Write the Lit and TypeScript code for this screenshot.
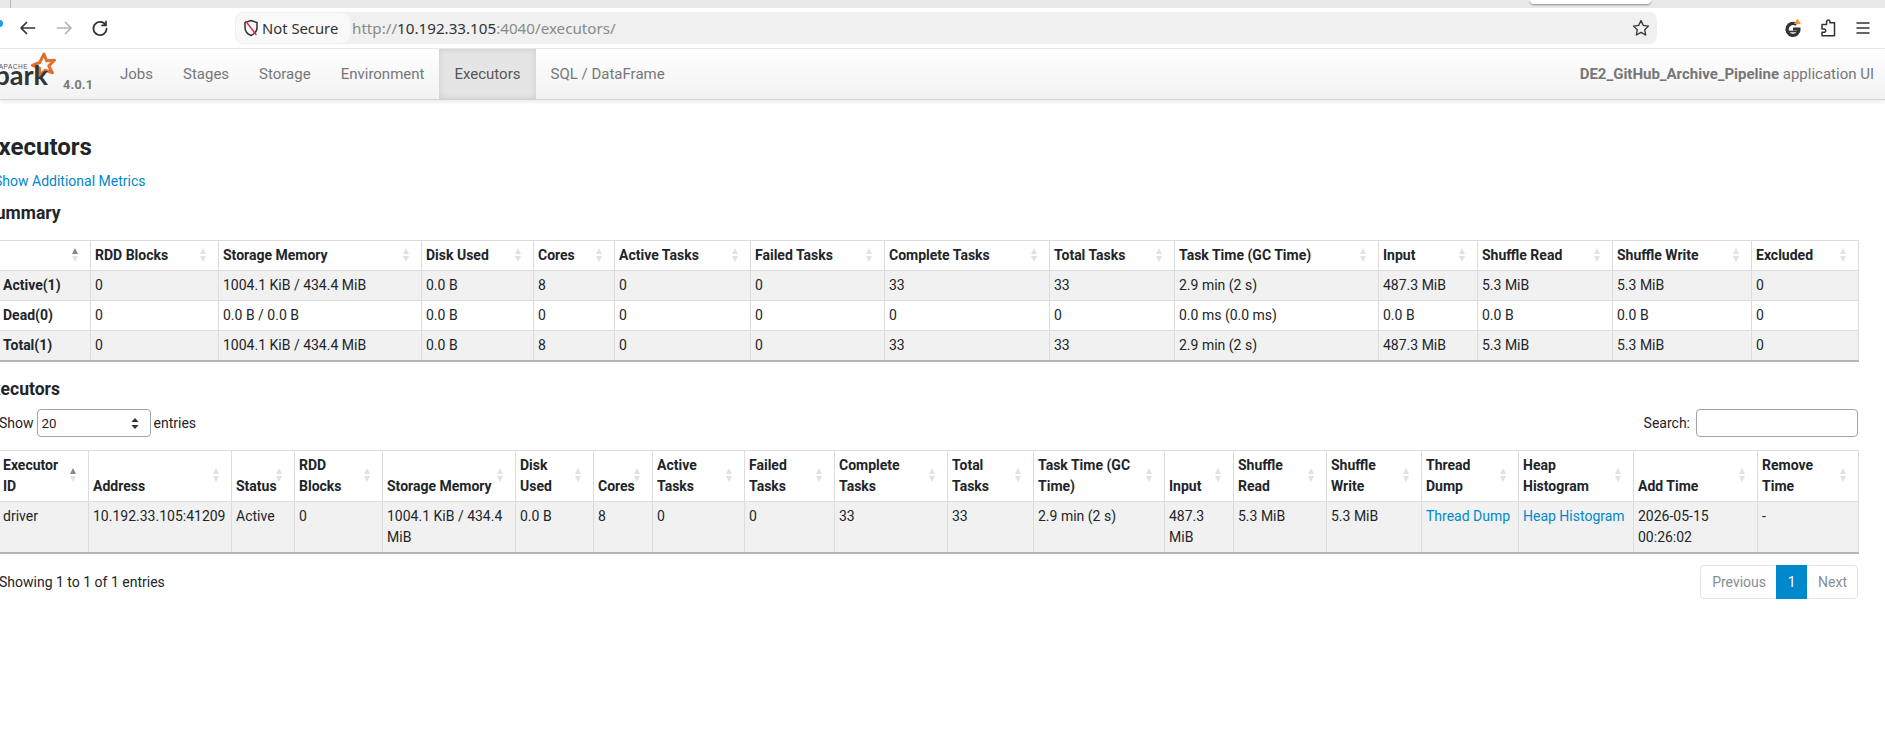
import { LitElement, html, css, svg } from 'lit';
import { customElement } from 'lit/decorators.js';

// column borders in page px, widths are derived from these
const summaryEdges = [-2, 90, 218, 421, 533, 614, 750, 884, 1049, 1174, 1378, 1477, 1612, 1751, 1858];
const executorEdges = [-2, 88, 231, 294, 382, 515, 593, 652, 744, 834, 947, 1033, 1164, 1233, 1326, 1421, 1518, 1633, 1757, 1858];

const summaryHead = ['', 'RDD Blocks', 'Storage Memory', 'Disk Used', 'Cores', 'Active Tasks', 'Failed Tasks',
  'Complete Tasks', 'Total Tasks', 'Task Time (GC Time)', 'Input', 'Shuffle Read', 'Shuffle Write', 'Excluded'];

const summaryRows = [
  ['Active(1)', '0', '1004.1 KiB / 434.4 MiB', '0.0 B', '8', '0', '0', '33', '33', '2.9 min (2 s)', '487.3 MiB', '5.3 MiB', '5.3 MiB', '0'],
  ['Dead(0)', '0', '0.0 B / 0.0 B', '0.0 B', '0', '0', '0', '0', '0', '0.0 ms (0.0 ms)', '0.0 B', '0.0 B', '0.0 B', '0'],
  ['Total(1)', '0', '1004.1 KiB / 434.4 MiB', '0.0 B', '8', '0', '0', '33', '33', '2.9 min (2 s)', '487.3 MiB', '5.3 MiB', '5.3 MiB', '0'],
];

const executorHead = ['Executor ID', 'Address', 'Status', 'RDD Blocks', 'Storage Memory', 'Disk Used', 'Cores',
  'Active Tasks', 'Failed Tasks', 'Complete Tasks', 'Total Tasks', 'Task Time (GC Time)', 'Input', 'Shuffle Read',
  'Shuffle Write', 'Thread Dump', 'Heap Histogram', 'Add Time', 'Remove Time'];

const executorRow = ['driver', '10.192.33.105:41209', 'Active', '0', '1004.1 KiB / 434.4 MiB', '0.0 B', '8', '0', '0',
  '33', '33', '2.9 min (2 s)', '487.3 MiB', '5.3 MiB', '5.3 MiB', 'Thread Dump', 'Heap Histogram', '2026-05-15 00:26:02', '-'];

const navItems = ['Jobs', 'Stages', 'Storage', 'Environment', 'Executors', 'SQL / DataFrame'];

const isLink = (v: string) => v === 'Thread Dump' || v === 'Heap Histogram';

@customElement('app-root')
export class AppRoot extends LitElement {
  static styles = css`
    :host {
      display: block;
      height: 755px;
      overflow: hidden;
      background: #fff;
      font-family: Roboto, sans-serif;
      font-size: 14px;
      line-height: 21px;
      color: #212529;
    }

    /* browser chrome */
    .tabstrip {
      position: relative;
      height: 8px;
      background: #e9e9e9;
    }
    .tabstrip .sep {
      position: absolute;
      left: 10px;
      top: 0;
      width: 1px;
      height: 8px;
      background: #b5b5b5;
    }
    .tabstrip .popup {
      position: absolute;
      left: 1530px;
      top: 0;
      width: 121px;
      height: 4px;
      background: #fff;
      border-radius: 0 0 6px 6px;
      box-shadow: 0 1px 2px rgba(0, 0, 0, 0.4);
    }
    .toolbar {
      position: relative;
      display: flex;
      align-items: center;
      height: 40px;
      border-bottom: 1px solid #e6e6e6;
      background: #fff;
      font-family: 'Noto Sans', sans-serif;
    }
    .dot {
      position: absolute;
      left: -4px;
      top: 12px;
      width: 7px;
      height: 7px;
      border-radius: 50%;
      background: #1a9df0;
    }
    .navicon {
      display: flex;
      width: 36px;
      justify-content: center;
    }
    .navicons {
      display: flex;
      margin-left: 10px;
      width: 225px;
    }
    .urlbar {
      display: flex;
      align-items: center;
      width: 1422px;
      height: 32px;
      box-sizing: border-box;
      background: #f0f0f0;
      border-radius: 8px;
      padding: 1px 7px 1px 1px;
    }
    .chip {
      display: flex;
      align-items: center;
      gap: 3px;
      width: 114px;
      height: 30px;
      box-sizing: border-box;
      padding-left: 7px;
      background: #f9f9f9;
      border-radius: 8px;
      font-size: 14.8px;
      color: #333;
      white-space: nowrap;
    }
    .url {
      flex: 1;
      margin-left: 2px;
      font-size: 15.2px;
      color: #8a8a8a;
      white-space: nowrap;
    }
    .url b {
      font-weight: 400;
      color: #333;
    }
    .tools {
      display: flex;
      align-items: center;
      margin-left: 127px;
      gap: 17px;
    }

    /* spark navbar */
    .navbar {
      display: flex;
      align-items: stretch;
      height: 50px;
      background: linear-gradient(to bottom, #fff, #f2f2f2);
      border-bottom: 1px solid #d4d4d4;
      box-shadow: 0 1px 5px rgba(0, 0, 0, 0.12);
      color: #777;
      font-size: 15px;
    }
    .brand {
      display: block;
      width: 105px;
      height: 50px;
      flex: none;
    }
    .navlink {
      display: flex;
      align-items: center;
      padding: 0 15px;
    }
    .navlink.active {
      background: #e5e5e5;
      color: #555;
      box-shadow: inset 0 0 7px rgba(0, 0, 0, 0.12);
    }
    .appname {
      margin-left: auto;
      align-self: center;
      padding-right: 11px;
    }
    .appname b {
      font-weight: 700;
    }

    /* page */
    .page {
      width: 1860px;
      margin-left: -2px;
      padding-top: 33px;
    }
    h1 {
      margin: 0 0 9px -13px;
      font-size: 24px;
      line-height: 29px;
      font-weight: 700;
    }
    .metrics {
      display: block;
      margin-left: -4px;
      color: #0088cc;
    }
    h2 {
      margin: 11px 0 17px -13px;
      font-size: 17.5px;
      line-height: 20px;
      font-weight: 700;
    }
    h2.second {
      margin: 17px 0 10px -16px;
    }
    a {
      color: #0088cc;
      text-decoration: none;
    }

    table {
      table-layout: fixed;
      width: 1860px;
      border-collapse: collapse;
    }
    th, td {
      border: 1px solid #dcdcdc;
      padding: 4px 5px 4px 4px;
      text-align: left;
      vertical-align: top;
    }
    th {
      position: relative;
      vertical-align: bottom;
      padding-right: 16px;
      font-weight: 700;
    }
    .summary th {
      white-space: nowrap;
    }
    td.label {
      font-weight: 700;
    }
    tbody tr:nth-child(odd) td {
      background: #f1f1f1;
    }
    tbody tr:last-child td {
      border-bottom: 2px solid #b4b4b4;
    }
    .sort {
      position: absolute;
      right: 12px;
      top: 50%;
      display: flex;
      flex-direction: column;
      gap: 2px;
      margin-top: -8px;
    }
    .sort i {
      display: block;
      width: 0;
      height: 0;
      border-left: 3.5px solid transparent;
      border-right: 3.5px solid transparent;
    }
    .sort .up {
      border-bottom: 6px solid #dfe3e6;
    }
    .sort .down {
      border-top: 6px solid #dfe3e6;
    }
    .sort.on .up {
      border-bottom-color: #868686;
    }

    .controls {
      display: flex;
      justify-content: space-between;
      align-items: center;
      height: 28px;
      margin-bottom: 13px;
    }
    .length, .search {
      display: flex;
      align-items: center;
    }
    .length {
      margin-left: 1px;
    }
    .select {
      display: flex;
      align-items: center;
      justify-content: space-between;
      box-sizing: border-box;
      width: 114px;
      height: 28px;
      margin: 0 3px 0 3px;
      padding: 1px 11px 0 4px;
      border: 1px solid #a3a3a3;
      border-radius: 4px;
      font-size: 13.3px;
    }
    .search input {
      box-sizing: border-box;
      width: 162px;
      height: 28px;
      margin-left: 6px;
      padding: 0 4px;
      border: 1px solid #a3a3a3;
      border-radius: 4px;
      background: #fff;
    }
    .footer {
      display: flex;
      justify-content: space-between;
      align-items: center;
      margin: 11px 0 0 1px;
    }
    .pager {
      display: flex;
      height: 34px;
      box-sizing: border-box;
      border: 1px solid #e3e6e8;
      border-radius: 4px;
      color: #868e96;
    }
    .pager span {
      display: flex;
      align-items: center;
      padding: 0 11px;
    }
    .pager .prev {
      padding-right: 10px;
    }
    .pager .next {
      padding-right: 10px;
    }
    .pager .current {
      margin: -1px 0;
      width: 31px;
      box-sizing: border-box;
      justify-content: center;
      background: #0088cc;
      color: #fff;
    }
  `;

  private icon(d: string, color = '#333', width = 1.7) {
    return html`<svg width="20" height="20" viewBox="0 0 20 20" fill="none" stroke=${color} stroke-width=${width}
      stroke-linecap="round" stroke-linejoin="round">${svg`<path d=${d}></path>`}</svg>`;
  }

  private renderChrome() {
    return html`
      <div class="tabstrip"><div class="sep"></div><div class="popup"></div></div>
      <div class="toolbar">
        <div class="dot"></div>
        <div class="navicons">
          <span class="navicon">${this.icon('M16.5 10H3.5M8.5 4.5L3 10l5.5 5.5')}</span>
          <span class="navicon">${this.icon('M3.5 10h13M11.5 4.5L17 10l-5.5 5.5', '#b4b4b4')}</span>
          <span class="navicon">${this.icon('M15.6 7A6.6 6.6 0 1 0 16.6 10.6M16 3.4V7.4H12', '#333')}</span>
        </div>
        <div class="urlbar">
          <div class="chip">
            <svg width="16" height="18" viewBox="0 0 16 18" fill="none" stroke-linecap="round">
              <path d="M8 1.5l6 2v5c0 4-2.6 6.6-6 8-3.4-1.4-6-4-6-8v-5z" stroke="#333" stroke-width="1.5"></path>
              <path d="M3 2.5l10 13" stroke="#e0314a" stroke-width="1.5"></path>
            </svg>
            Not Secure
          </div>
          <div class="url">http://<b>10.192.33.105</b>:4040/executors/</div>
          <svg width="18" height="18" viewBox="0 0 18 18" fill="none" stroke="#333" stroke-width="1.3" stroke-linejoin="round">
            <path d="M9 1.5l2.3 4.9 5.2.7-3.8 3.6 1 5.3L9 13.4 4.3 16l1-5.3L1.500 7.1l5.2-.7z"></path>
          </svg>
        </div>
        <div class="tools">
          <svg width="18" height="20" viewBox="0 0 18 20" fill="none">
            <path d="M12.500 6.500A6 6 0 1 0 15 11H9" stroke="#333" stroke-width="3.2"></path>
            <path d="M3.500 13.500h11" stroke="#333" stroke-width="1.6"></path>
            <path d="M13.500 0.500l3.500 5.500h-7z" fill="#f59b2c"></path>
          </svg>
          <svg width="18" height="20" viewBox="0 0 18 20" fill="none" stroke="#333" stroke-width="1.5" stroke-linejoin="round">
            <path d="M8 2.500c1.800-1.200 3.600.2 2.800 2.300H15.500v13H3v-3.600h2.800c1.400-.6 1.200-3-.6-3.200H3V6.500h4.500c.4-1.300-.4-2.700.5-4z"></path>
          </svg>
          <svg width="18" height="20" viewBox="0 0 18 20" fill="none" stroke="#333" stroke-width="1.4">
            <path d="M2.500 5h13M2.500 10h13M2.500 15h13"></path>
          </svg>
        </div>
      </div>
    `;
  }

  private renderBrand() {
    return html`<svg class="brand" viewBox="0 0 105 50">
      <path d="M44 5l2.500 6.800 8-.6-5.800 5.800 3.800 6.800-7.400-2.600-5.300 5.300-.4-7.400-7-2.700 7.300-2.900z"
        fill="none" stroke="#e0702c" stroke-width="3" stroke-linejoin="round"></path>
      <text x="28" y="19.500" text-anchor="end" font-family="'Liberation Sans', sans-serif" font-size="6.500"
        font-weight="400" letter-spacing="0.500" fill="#555">APACHE</text>
      <text x="48" y="35.500" text-anchor="end" font-family="Lato, sans-serif" font-size="27" font-weight="700"
        fill="#333">park</text>
      <text x="63" y="40" font-family="Roboto, sans-serif" font-size="12.500" font-weight="700" letter-spacing="0.300"
        fill="#777">4.0.1</text>
    </svg>`;
  }

  private renderNavbar() {
    return html`
      <nav class="navbar">
        ${this.renderBrand()}
        ${navItems.map((n) => html`<div class="navlink ${n === 'Executors' ? 'active' : ''}">${n}</div>`)}
        <div class="appname"><b>DE2_GitHub_Archive_Pipeline</b> application UI</div>
      </nav>
    `;
  }

  private cols(edges: number[]) {
    return html`<colgroup>
      ${edges.slice(1).map((e, i) => html`<col style="width:${e - edges[i]}px" />`)}
    </colgroup>`;
  }

  private sort(on: boolean) {
    return html`<span class="sort ${on ? 'on' : ''}"><i class="up"></i><i class="down"></i></span>`;
  }

  private renderSummary() {
    return html`
      <table class="summary">
        ${this.cols(summaryEdges)}
        <thead>
          <tr>${summaryHead.map((h, i) => html`<th>${h}${this.sort(i === 0)}</th>`)}</tr>
        </thead>
        <tbody>
          ${summaryRows.map((row) => html`<tr>
            ${row.map((v, i) => html`<td class=${i === 0 ? 'label' : ''}>${v}</td>`)}
          </tr>`)}
        </tbody>
      </table>
    `;
  }

  private renderExecutors() {
    return html`
      <table>
        ${this.cols(executorEdges)}
        <thead>
          <tr>${executorHead.map((h, i) => html`<th>${h}${this.sort(i === 0)}</th>`)}</tr>
        </thead>
        <tbody>
          <tr>${executorRow.map((v) => html`<td>${isLink(v) ? html`<a href="#">${v}</a>` : v}</td>`)}</tr>
        </tbody>
      </table>
    `;
  }

  render() {
    return html`
      ${this.renderChrome()}
      ${this.renderNavbar()}
      <main class="page">
        <h1>Executors</h1>
        <a class="metrics" href="#">Show Additional Metrics</a>
        <h2>Summary</h2>
        ${this.renderSummary()}
        <h2 class="second">Executors</h2>
        <div class="controls">
          <div class="length">
            Show
            <div class="select">
              <span>20</span>
              <svg width="8" height="11" viewBox="0 0 8 11" fill="#333">
                <path d="M4 0l3.600 4H.4zM4 11L.4 7h7.200z"></path>
              </svg>
            </div>
            entries
          </div>
          <label class="search">Search:<input type="text" /></label>
        </div>
        ${this.renderExecutors()}
        <div class="footer">
          <div>Showing 1 to 1 of 1 entries</div>
          <div class="pager">
            <span class="prev">Previous</span>
            <span class="current">1</span>
            <span class="next">Next</span>
          </div>
        </div>
      </main>
    `;
  }
}
